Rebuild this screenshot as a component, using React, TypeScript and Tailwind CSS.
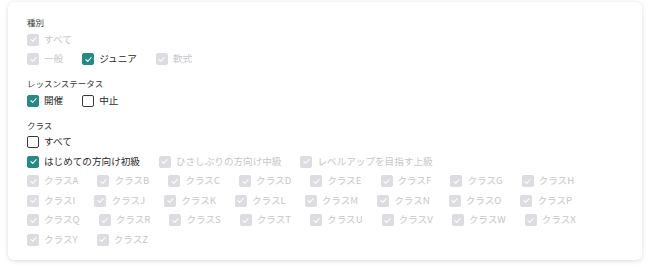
import React from 'react';

type Item = { label: string; checked?: boolean; disabled?: boolean };

function Check({ label, checked, disabled }: Item) {
  const box = disabled
    ? 'bg-[#dcdce1] border-[#dcdce1]'
    : checked
      ? 'bg-[#268a84] border-[#268a84]'
      : 'bg-white border-[#3a3a3a]';
  return (
    <label className="flex h-[19.5px] items-center gap-[5px]">
      <span
        className={`flex h-3 w-3 shrink-0 items-center justify-center rounded-[2px] border-[1.5px] ${box}`}
      >
        {(checked || disabled) && (
          <svg viewBox="0 0 12 12" className="h-[9px] w-[9px]" fill="none">
            <path
              d="M2.5 6.2 L5 8.5 L9.5 3.5"
              stroke="white"
              strokeWidth="1.4"
              strokeLinecap="round"
              strokeLinejoin="round"
            />
          </svg>
        )}
      </span>
      <span
        className={`text-[9.6px] leading-none ${disabled ? 'text-[#c6c6cb]' : 'text-[#2a2a2a]'}`}
      >
        {label}
      </span>
    </label>
  );
}

function Group({ title, rows, first }: { title: string; rows: Item[][]; first?: boolean }) {
  return (
    <div className={first ? '' : 'mt-1.5'}>
      <p className="h-4 text-[8.5px] leading-4 text-[#3a3a3a]">{title}</p>
      {rows.map((row, i) => (
        <div key={i} className="flex flex-wrap gap-x-[19px]">
          {row.map((it) => (
            <Check key={it.label} {...it} />
          ))}
        </div>
      ))}
    </div>
  );
}

const letters = 'ABCDEFGHIJKLMNOPQRSTUVWXYZ'.split('');

export default function App() {
  const levels: Item[] = [
    { label: 'はじめての方向け初級', checked: true },
    { label: 'ひさしぶりの方向け中級', disabled: true },
    { label: 'レベルアップを目指す上級', disabled: true },
  ];
  const classes: Item[] = letters.map((l) => ({ label: `クラス${l}`, disabled: true }));

  return (
    <div
      className="bg-white w-[650px] h-[273px] pt-[2px] px-2"
      style={{ fontFamily: '"Noto Sans CJK JP", "Noto Sans", sans-serif' }}
    >
      <div className="rounded-md bg-white pt-3 pb-[10px] pl-[19px] pr-[19px] shadow-[0_1px_5px_rgba(0,0,0,0.14)]">
        <Group
          first
          title="種別"
          rows={[
            [{ label: 'すべて', disabled: true }],
            [
              { label: '一般', disabled: true },
              { label: 'ジュニア', checked: true },
              { label: '軟式', disabled: true },
            ],
          ]}
        />
        <Group
          title="レッスンステータス"
          rows={[[{ label: '開催', checked: true }, { label: '中止' }]]}
        />
        <Group title="クラス" rows={[[{ label: 'すべて' }], levels, classes]} />
      </div>
    </div>
  );
}
